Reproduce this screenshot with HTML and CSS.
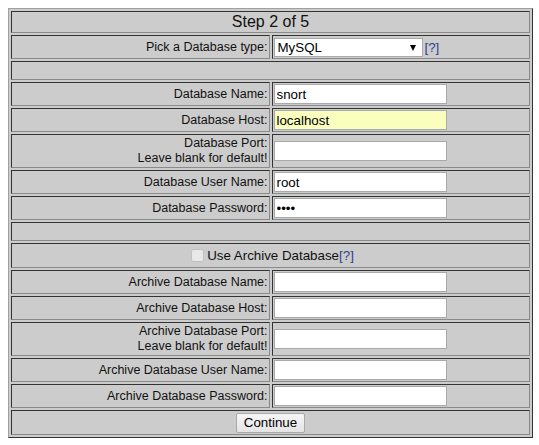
FILE: index.html
```html
<!DOCTYPE html>
<html>
<head>
<meta charset="utf-8">
<link rel="stylesheet" href="styles.css">
</head>
<body>
<form class="setup">
<table class="grid">
  <tr><td colspan="2" class="title">Step 2 of 5</td></tr>
  <tr>
    <td class="label">Pick a Database type:</td>
    <td class="field"><div class="pick"><span class="selwrap"><select class="dbsel"><option>MySQL</option></select></span><a class="help" href="#">[?]</a></div></td>
  </tr>
  <tr><td colspan="2" class="blank">&nbsp;</td></tr>
  <tr><td class="label">Database Name:</td><td class="field"><input class="txt" type="text" value="snort"></td></tr>
  <tr><td class="label">Database Host:</td><td class="field"><input class="txt auto" type="text" value="localhost"></td></tr>
  <tr><td class="label">Database Port:<br>Leave blank for default!</td><td class="field"><input class="txt" type="text" value=""></td></tr>
  <tr><td class="label">Database User Name:</td><td class="field"><input class="txt" type="text" value="root"></td></tr>
  <tr><td class="label">Database Password:</td><td class="field"><input class="txt" type="password" value="root"></td></tr>
  <tr><td colspan="2" class="blank">&nbsp;</td></tr>
  <tr><td colspan="2" class="center archive"><input class="chk" type="checkbox" disabled>Use Archive Database<a class="help" href="#">[?]</a></td></tr>
  <tr><td class="label">Archive Database Name:</td><td class="field"><input class="txt" type="text"></td></tr>
  <tr><td class="label">Archive Database Host:</td><td class="field"><input class="txt" type="text"></td></tr>
  <tr><td class="label">Archive Database Port:<br>Leave blank for default!</td><td class="field"><input class="txt" type="text"></td></tr>
  <tr><td class="label">Archive Database User Name:</td><td class="field"><input class="txt" type="text"></td></tr>
  <tr><td class="label">Archive Database Password:</td><td class="field"><input class="txt" type="password"></td></tr>
  <tr><td colspan="2" class="center"><button type="button" class="btn">Continue</button></td></tr>
</table>
</form>
</body>
</html>
```
FILE: styles.css
```css
html, body {
  margin: 0;
  background: #ffffff;
}
body {
  padding: 8px;
  font-family: "Liberation Sans", Arial, sans-serif;
  color: #111;
}
.setup {
  margin: 0;
}
.grid {
  width: 525px;
  background: #cccccc;
  border-collapse: separate;
  border-spacing: 2px;
  border: 1px solid;
  border-color: #a0a0a0 #333333 #333333 #a0a0a0;
}
.grid td {
  border: 1px solid;
  border-color: #333333 #8a8a8a #8a8a8a #333333;
  padding: 1px;
  font-size: 12.5px;
  line-height: 15px;
}
.grid td.title {
  text-align: center;
  font-size: 16px;
  line-height: 18px;
}
.grid td.label {
  width: 50%;
  text-align: right;
}
.grid td.field {
  width: 50%;
  text-align: left;
}
.grid td.blank {
  font-size: 13px;
  line-height: 15px;
}
.grid td.center {
  text-align: center;
  line-height: 21px;
}
.grid td.archive {
  font-size: 13.33px;
}
.pick {
  display: flex;
  align-items: center;
  gap: 2px;
  height: 20px;
}
.selwrap {
  position: relative;
  display: block;
}
.selwrap::after {
  content: "";
  position: absolute;
  right: 7px;
  top: 7px;
  border-left: 3.5px solid transparent;
  border-right: 3.5px solid transparent;
  border-top: 6px solid #000;
  pointer-events: none;
}
.dbsel {
  appearance: none;
  -webkit-appearance: none;
  display: block;
  font-family: "Liberation Sans", Arial, sans-serif;
  font-size: 13.33px;
  width: 149px;
  height: 19px;
  margin: 0;
  padding: 0 3px;
  border: 1px solid #a9a9a9;
  border-radius: 0;
  background: #fff;
  color: #000;
}
.txt {
  display: block;
  font-family: "Liberation Sans", Arial, sans-serif;
  font-size: 13.33px;
  width: 173px;
  height: 20px;
  box-sizing: border-box;
  margin: 0;
  padding: 1px 2px;
  border: 1px solid #a9a9a9;
  background: #fff;
  color: #000;
}
.txt.auto {
  background: #faffbd;
}
.help {
  color: #2b3f8c;
  text-decoration: none;
  font-size: 13.33px;
}
.chk {
  width: 13px;
  height: 13px;
  margin: 0 3px 0 4px;
  vertical-align: -2px;
}
.btn {
  font-family: "Liberation Sans", Arial, sans-serif;
  font-size: 13.33px;
  height: 20px;
  padding: 0 7px;
  margin: 0;
  border: 1px solid #a9a9a9;
  border-radius: 2px;
  background: linear-gradient(#f6f6f6, #e4e4e4);
  color: #000;
  vertical-align: middle;
}
```
